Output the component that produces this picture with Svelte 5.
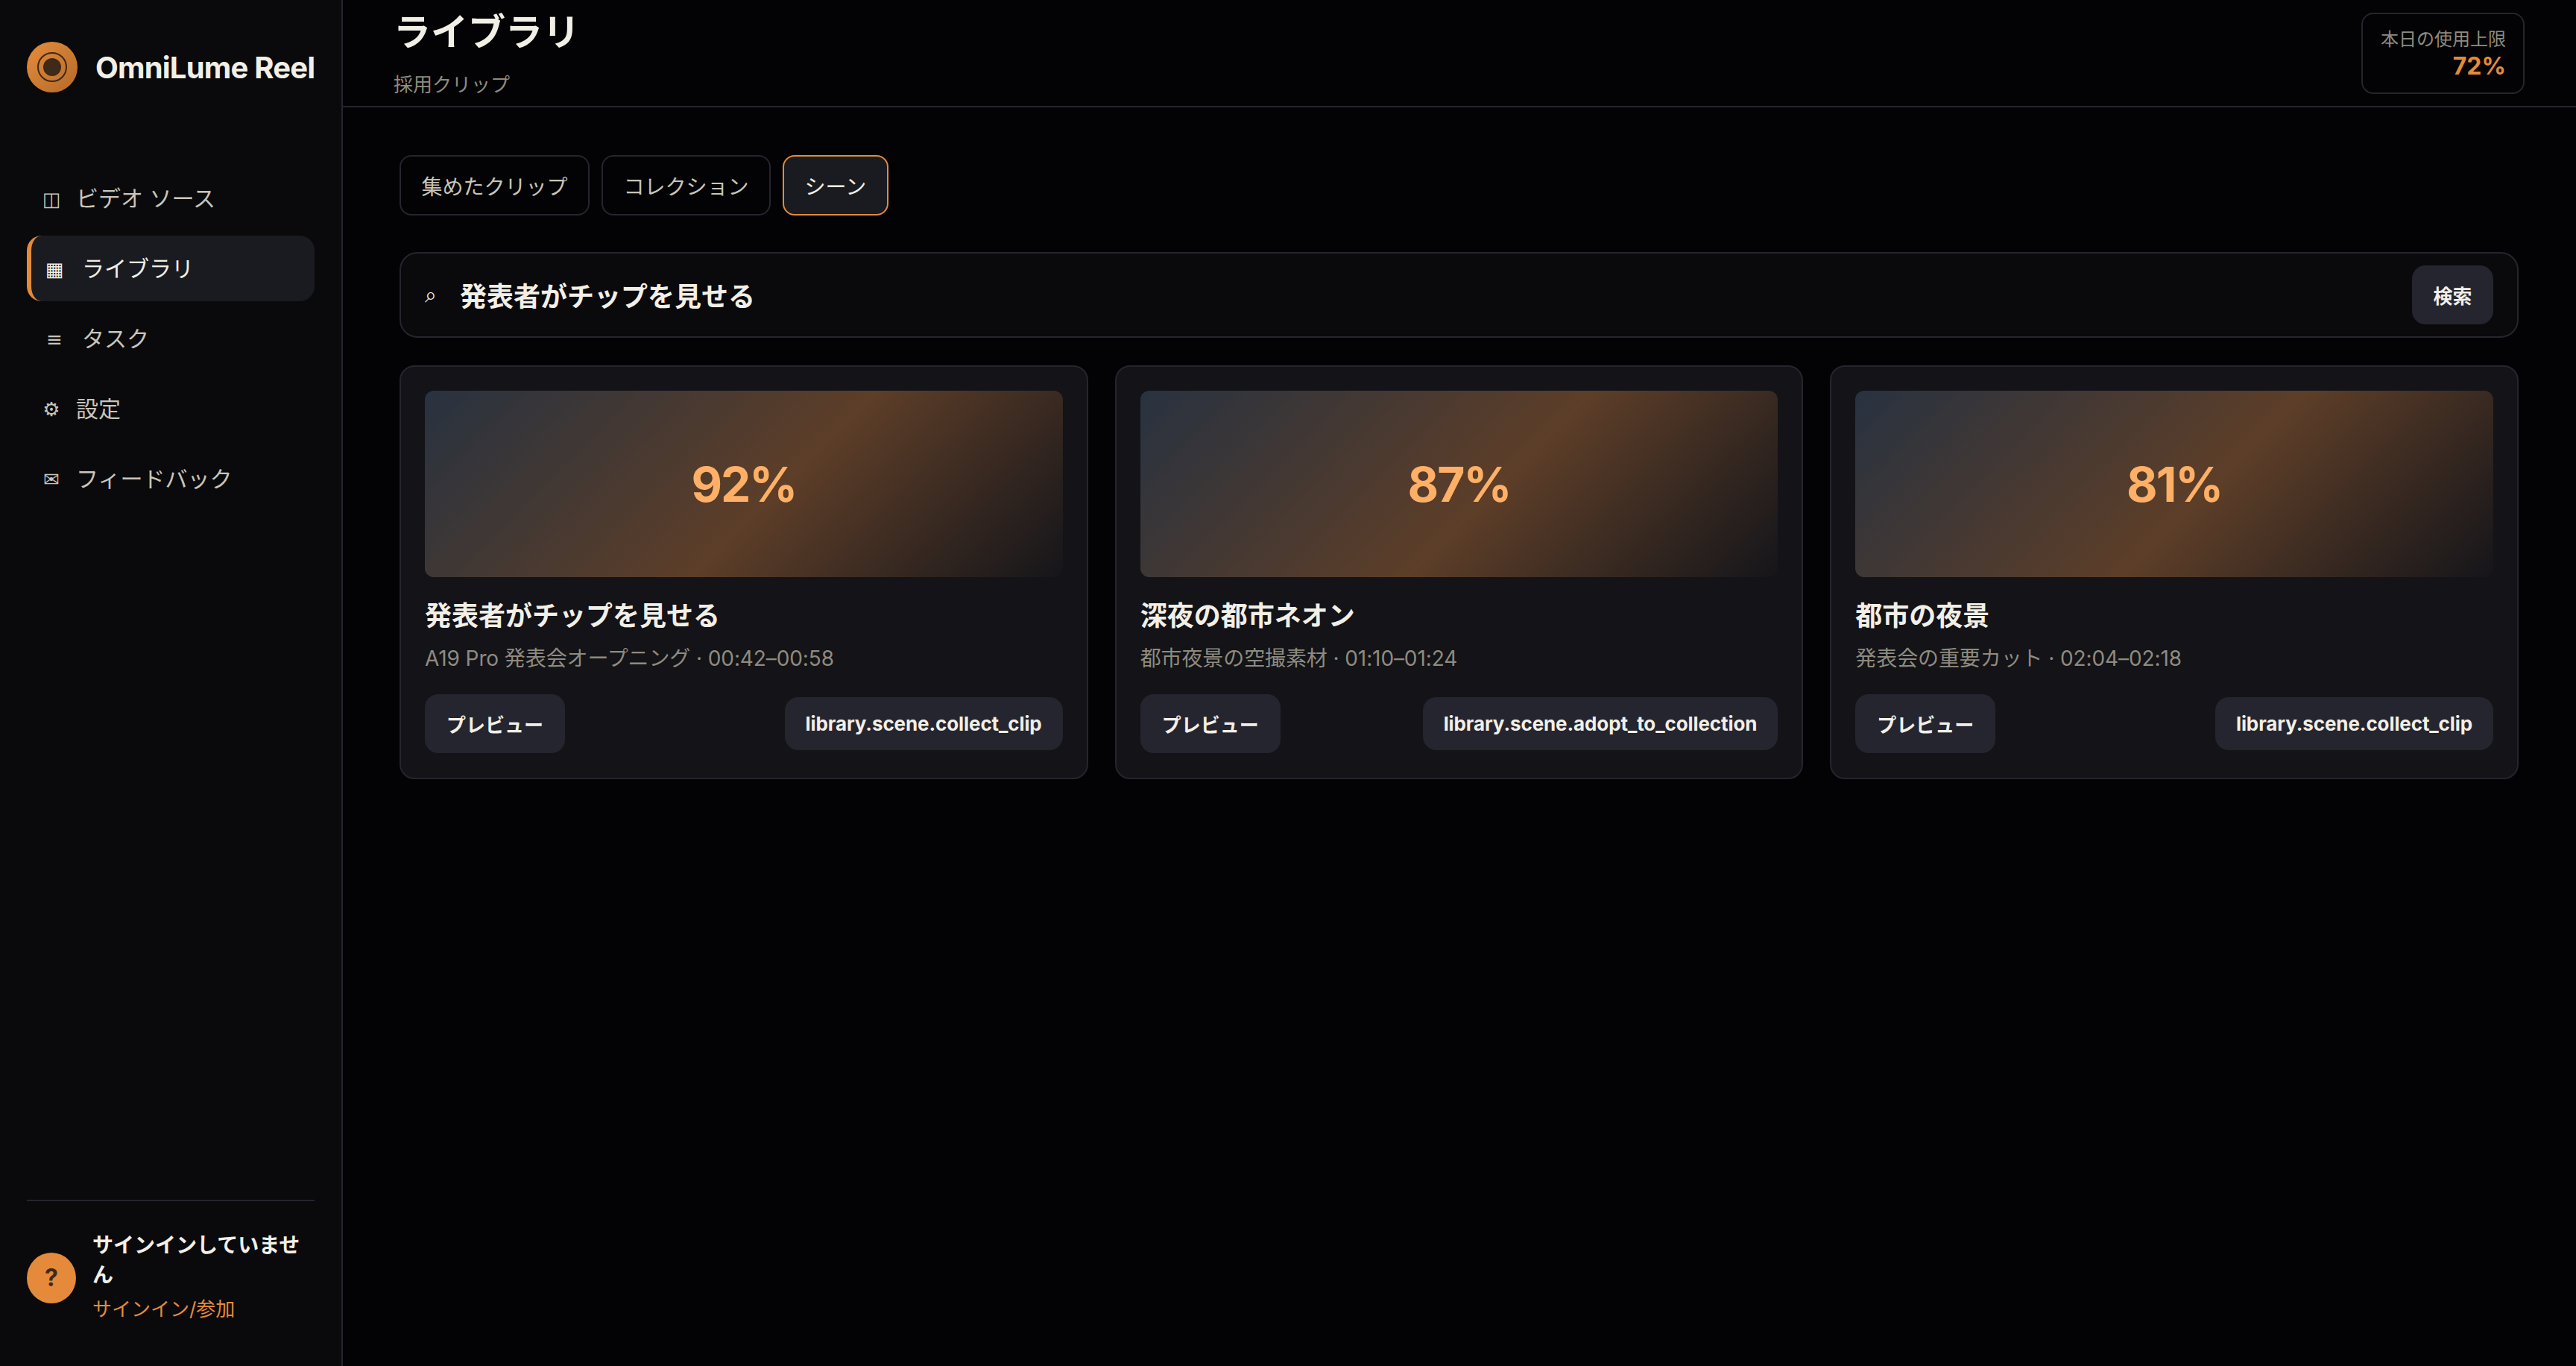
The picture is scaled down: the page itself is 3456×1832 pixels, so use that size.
<script lang="ts">
  const navItems = [
    { icon: "◫", label: "ビデオ ソース" },
    { icon: "▦", label: "ライブラリ", active: true, wide: true },
    { icon: "≡", label: "タスク", wide: true },
    { icon: "⚙", label: "設定" },
    { icon: "✉", label: "フィードバック" },
  ];

  const tabs = [
    { label: "集めたクリップ" },
    { label: "コレクション" },
    { label: "シーン", active: true },
  ];

  const scenes = [
    {
      score: "92%",
      title: "発表者がチップを見せる",
      meta: "A19 Pro 発表会オープニング · 00:42–00:58",
      action: "library.scene.collect_clip",
    },
    {
      score: "87%",
      title: "深夜の都市ネオン",
      meta: "都市夜景の空撮素材 · 01:10–01:24",
      action: "library.scene.adopt_to_collection",
    },
    {
      score: "81%",
      title: "都市の夜景",
      meta: "発表会の重要カット · 02:04–02:18",
      action: "library.scene.collect_clip",
    },
  ];
</script>

<div class="app">
  <aside class="sidebar">
    <div class="brand">
      <span class="logo"><span class="logo-ring"><span class="logo-dot"></span></span></span>
      <span class="brand-name">OmniLume Reel</span>
    </div>

    <nav class="nav">
      {#each navItems as item}
        <div class="nav-item" class:active={item.active}>
          <span class="nav-icon" class:wide={item.wide}>{item.icon}</span>
          <span>{item.label}</span>
        </div>
      {/each}
    </nav>

    <div class="account">
      <span class="avatar">?</span>
      <div class="account-text">
        <div class="account-name">サインインしていません</div>
        <div class="account-link">サインイン/参加</div>
      </div>
    </div>
  </aside>

  <main class="main">
    <header class="header">
      <div class="heading">
        <h1>ライブラリ</h1>
        <p>採用クリップ</p>
      </div>
      <div class="usage">
        <span class="usage-label">本日の使用上限</span>
        <span class="usage-value">72%</span>
      </div>
    </header>

    <div class="content">
      <div class="tabs">
        {#each tabs as tab}
          <button class="tab" class:active={tab.active}>{tab.label}</button>
        {/each}
      </div>

      <div class="search">
        <span class="search-icon">⌕</span>
        <span class="search-text">発表者がチップを見せる</span>
        <button class="btn search-btn">検索</button>
      </div>

      <div class="grid">
        {#each scenes as scene}
          <article class="card">
            <div class="preview">{scene.score}</div>
            <h2>{scene.title}</h2>
            <p class="meta">{scene.meta}</p>
            <div class="actions">
              <button class="btn btn-preview">プレビュー</button>
              <button class="btn btn-action">{scene.action}</button>
            </div>
          </article>
        {/each}
      </div>
    </div>
  </main>
</div>

<style>
  :global(body) {
    margin: 0;
    background: #030305;
  }

  .app {
    display: flex;
    height: 1832px;
    overflow: hidden;
    background: #030305;
    color: #f2efe6;
    font-family: Inter, "Noto Sans CJK JP", sans-serif;
  }

  .sidebar {
    width: 460px;
    flex: none;
    box-sizing: border-box;
    display: flex;
    flex-direction: column;
    padding: 56px 36px 0;
    background: #0a0a0d;
    border-right: 2px solid #25252e;
  }

  .brand {
    display: flex;
    align-items: center;
    gap: 24px;
    margin-bottom: 98px;
  }

  .logo {
    width: 68px;
    height: 68px;
    flex: none;
    border-radius: 50%;
    display: flex;
    align-items: center;
    justify-content: center;
    background: linear-gradient(135deg, #e58c3c, #b56a28);
  }

  .logo-ring {
    width: 36px;
    height: 36px;
    border-radius: 50%;
    border: 2px solid #3d2a18;
    display: flex;
    align-items: center;
    justify-content: center;
  }

  .logo-dot {
    width: 24px;
    height: 24px;
    border-radius: 50%;
    background: #3d2a18;
  }

  .brand-name {
    font-size: 40px;
    font-weight: 700;
    letter-spacing: -0.8px;
    white-space: nowrap;
  }

  .nav {
    display: flex;
    flex-direction: column;
    gap: 6px;
    flex: 1;
  }

  .nav-item {
    height: 88px;
    box-sizing: border-box;
    display: flex;
    align-items: center;
    gap: 20px;
    padding: 0 20px 4px;
    border-radius: 20px;
    font-size: 30px;
    color: #c9c5b9;
  }

  .nav-item.active {
    background: #1a1b21;
    border-left: 6px solid #e58a3a;
    padding-left: 14px;
    color: #f2efe6;
  }

  .nav-icon {
    width: 26px;
    padding-top: 6px;
    text-align: center;
    font-family: "DejaVu Sans", sans-serif;
    font-size: 26px;
  }

  .nav-icon.wide {
    width: 34px;
  }

  .account {
    display: flex;
    align-items: center;
    gap: 22px;
    height: 223px;
    box-sizing: border-box;
    border-top: 2px solid #25252e;
    padding-bottom: 16px;
  }

  .avatar {
    width: 66px;
    height: 68px;
    flex: none;
    border-radius: 50%;
    background: #e58a3a;
    color: #3d2a18;
    display: flex;
    align-items: center;
    justify-content: center;
    font-size: 32px;
    font-weight: 700;
  }

  .account-name {
    font-size: 28px;
    font-weight: 700;
    line-height: 40px;
  }

  .account-link {
    font-size: 26px;
    line-height: 42px;
    margin-top: 5px;
    color: #e58a3a;
  }

  .main {
    flex: 1;
    min-width: 0;
  }

  .header {
    height: 144px;
    box-sizing: border-box;
    display: flex;
    align-items: center;
    justify-content: space-between;
    padding: 0 69px 0 68px;
    border-bottom: 2px solid #25252e;
  }

  .heading {
    padding-top: 4px;
  }

  h1 {
    margin: 0;
    font-size: 50px;
    font-weight: 700;
    line-height: 62px;
  }

  .heading p {
    margin: 20px 0 0;
    font-size: 26px;
    line-height: 40px;
    color: #8f8b7f;
  }

  .usage {
    display: flex;
    flex-direction: column;
    align-items: flex-end;
    box-sizing: border-box;
    width: 219px;
    height: 109px;
    justify-content: center;
    padding: 0 23px 0 24px;
    border: 2px solid #25252e;
    border-radius: 16px;
  }

  .usage-label {
    font-size: 24px;
    line-height: 36px;
    color: #8f8b7f;
    white-space: nowrap;
  }

  .usage-value {
    font-size: 32px;
    line-height: 36px;
    font-weight: 700;
    color: #e58a3a;
  }

  .content {
    padding: 64px 77px 0 76px;
  }

  .tabs {
    display: flex;
    gap: 16px;
    margin-bottom: 49px;
  }

  .tab {
    height: 81px;
    padding: 0 27.5px;
    border: 2px solid #25252e;
    border-radius: 16px;
    background: transparent;
    color: #c9c5b9;
    font: inherit;
    font-size: 28px;
  }

  .tab.active {
    background: #1a1b21;
    border-color: #e58a3a;
    color: #f2efe6;
  }

  .search {
    display: flex;
    align-items: center;
    height: 115px;
    box-sizing: border-box;
    padding: 0 32px;
    margin-bottom: 37px;
    background: #0a0a0d;
    border: 2px solid #25252e;
    border-radius: 24px;
  }

  .search-icon {
    font-family: "DejaVu Sans", sans-serif;
    font-size: 28px;
    margin-right: 31px;
  }

  .search-text {
    flex: 1;
    font-size: 36px;
    font-weight: 700;
    margin-top: -2px;
  }

  .btn {
    border: none;
    border-radius: 18px;
    background: #25252f;
    color: #f2efe6;
    font: inherit;
    font-size: 26px;
    font-weight: 700;
  }

  .search-btn {
    width: 109px;
    height: 79px;
  }

  .grid {
    display: grid;
    grid-template-columns: repeat(3, 1fr);
    gap: 36px;
  }

  .card {
    box-sizing: border-box;
    height: 555px;
    padding: 32px;
    background: #131318;
    border: 2px solid #25252e;
    border-radius: 20px;
  }

  .preview {
    height: 250px;
    display: flex;
    align-items: center;
    justify-content: center;
    border-radius: 12px;
    background: linear-gradient(135deg, #283240 0%, #5d3e28 55%, #15151a 100%);
    color: #ffb066;
    font-size: 64px;
    font-weight: 700;
    letter-spacing: -2px;
  }

  h2 {
    margin: 28px 0 0;
    font-size: 36px;
    font-weight: 700;
    line-height: 48px;
  }

  .meta {
    margin: 12px 0 0;
    font-size: 28px;
    line-height: 42px;
    letter-spacing: -0.1px;
    color: #8f8b7f;
  }

  .actions {
    display: flex;
    align-items: center;
    justify-content: space-between;
    margin-top: 27px;
  }

  .btn-preview {
    height: 79px;
    padding: 0 29px;
  }

  .btn-action {
    height: 71px;
    padding: 0 28px;
    letter-spacing: -0.1px;
  }
</style>
